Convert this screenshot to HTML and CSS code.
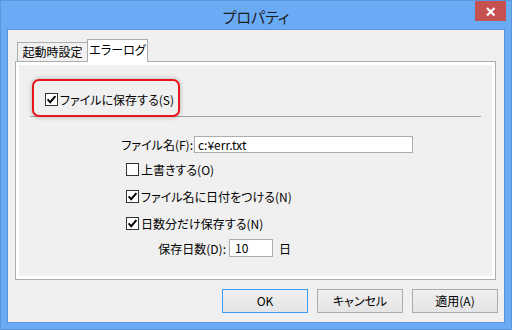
FILE: index.html
```html
<!DOCTYPE html>
<html lang="ja">
<head>
<meta charset="utf-8">
<title>プロパティ</title>
<link rel="stylesheet" href="styles.css">
</head>
<body>
<div class="window">
  <div class="titlebar">
    <span></span>
    <div class="title">プロパティ</div>
    <div class="close-wrap">
      <div class="close">
        <svg width="31" height="20" viewBox="0 0 31 20"><path d="M12 7 L19.5 14.5 M19.5 7 L12 14.5" stroke="#fff" stroke-width="2.2" fill="none"/></svg>
      </div>
    </div>
  </div>
  <div class="client">
    <div class="tabs">
      <div class="tab">起動時設定</div>
      <div class="tab active">エラーログ</div>
    </div>
    <div class="panel">
      <div class="page">
        <div class="save-row">
          <div class="highlight">
            <div class="check-row">
              <svg class="box" width="13" height="13" viewBox="0 0 13 13"><rect x="0.5" y="0.5" width="12" height="12" fill="#fff" stroke="#333"/><path d="M2.6 6.4 L5.2 9.2 L10.4 3.2" stroke="#000" stroke-width="2" fill="none"/></svg>
              <span>ファイルに保存する(S)</span>
            </div>
          </div>
        </div>
        <div class="field-row file">
          <span class="label">ファイル名(F):</span>
          <span class="input wide">c:¥err.txt</span>
        </div>
        <div class="check-row option first">
          <svg class="box" width="13" height="13" viewBox="0 0 13 13"><rect x="0.5" y="0.5" width="12" height="12" fill="#fff" stroke="#333"/></svg>
          <span>上書きする(O)</span>
        </div>
        <div class="check-row option">
          <svg class="box" width="13" height="13" viewBox="0 0 13 13"><rect x="0.5" y="0.5" width="12" height="12" fill="#fff" stroke="#333"/><path d="M2.6 6.4 L5.2 9.2 L10.4 3.2" stroke="#000" stroke-width="2" fill="none"/></svg>
          <span>ファイル名に日付をつける(N)</span>
        </div>
        <div class="check-row option">
          <svg class="box" width="13" height="13" viewBox="0 0 13 13"><rect x="0.5" y="0.5" width="12" height="12" fill="#fff" stroke="#333"/><path d="M2.6 6.4 L5.2 9.2 L10.4 3.2" stroke="#000" stroke-width="2" fill="none"/></svg>
          <span>日数分だけ保存する(N)</span>
        </div>
        <div class="field-row days">
          <span class="label">保存日数(D):</span>
          <span class="input short">10</span>
          <span class="unit">日</span>
        </div>
      </div>
    </div>
    <div class="buttons">
      <div class="btn default">OK</div>
      <div class="btn">キャンセル</div>
      <div class="btn">適用(A)</div>
    </div>
  </div>
</div>
</body>
</html>
```
FILE: styles.css
```css
html, body {
  margin: 0;
  padding: 0;
  background: #6aabf5;
}
body {
  font-family: "Noto Sans CJK JP", "Noto Sans", sans-serif;
  font-size: 12px;
  color: #000;
  font-feature-settings: "palt";
}
.window {
  width: 512px;
  height: 330px;
  box-sizing: border-box;
  border: 1px solid #5b96dc;
  background: #6aabf5;
  display: flex;
  flex-direction: column;
}
.titlebar {
  height: 28px;
  flex: none;
  display: grid;
  grid-template-columns: 1fr auto 1fr;
}
.title {
  font-size: 15px;
  line-height: 28px;
  padding-top: 2px;
  color: #1e1e1e;
}
.close-wrap {
  justify-self: end;
  padding-right: 5px;
}
.close {
  width: 31px;
  height: 20px;
  background: #c75050;
}
.close svg {
  display: block;
}
.client {
  flex: 1;
  margin: 0 6px 6px 6px;
  border: 1px solid #5a92d6;
  background: #f0f0f0;
  display: flex;
  flex-direction: column;
}
.tabs {
  display: flex;
  align-items: flex-end;
  height: 22px;
  margin: 9px 0 0 9px;
}
.tab {
  box-sizing: border-box;
  width: 71px;
  height: 19px;
  border: 1px solid #acacac;
  border-bottom: 0;
  background: #f0f0f0;
  text-align: center;
  line-height: 18px;
}
.tab.active {
  width: 61px;
  height: 23px;
  margin-left: -1px;
  margin-bottom: -1px;
  background: #fff;
  line-height: 20px;
  position: relative;
  z-index: 1;
}
.panel {
  box-sizing: border-box;
  height: 219px;
  margin: 0 8px 0 7px;
  border: 1px solid #adadad;
  background: #fff;
  padding: 3px;
}
.page {
  height: 100%;
  background: #f0f0f0;
  overflow: hidden;
}
.save-row {
  margin: 14px 11px 0 11px;
  border-bottom: 1px solid #a0a0a0;
}
.highlight {
  box-sizing: border-box;
  width: 148px;
  height: 38px;
  margin-left: 2px;
  margin-bottom: -1px;
  border: 2px solid #e8161c;
  border-radius: 7px;
  box-shadow: 0 0 5px rgba(0, 0, 0, 0.28);
  padding: 12px 0 0 11px;
  position: relative;
  z-index: 1;
  background: #f0f0f0;
}
.check-row {
  display: flex;
  align-items: center;
  height: 13px;
  line-height: 13px;
  gap: 2px;
  white-space: nowrap;
}
.box {
  display: block;
  flex: none;
}
.field-row {
  display: flex;
  align-items: center;
  white-space: nowrap;
}
.field-row.file {
  margin: 19px 0 0 95px;
}
.field-row.file .label {
  width: 79px;
  text-align: right;
  padding-right: 1px;
}
.input {
  box-sizing: border-box;
  background: #fff;
  border: 1px solid #abadb3;
  padding-left: 3px;
  line-height: 15px;
}
.input.wide {
  width: 219px;
  height: 17px;
}
.input.short {
  width: 44px;
  height: 18px;
  line-height: 16px;
  padding-left: 5px;
}
.check-row.option {
  margin: 14px 0 0 107px;
}
.check-row.option.first {
  margin-top: 10px;
}
.field-row.days {
  margin: 9px 0 0 136px;
}
.field-row.days .label {
  width: 71px;
  text-align: right;
  padding-right: 3px;
}
.unit {
  margin-left: 6px;
}
.buttons {
  display: flex;
  justify-content: flex-end;
  gap: 9px;
  margin: 9px 6px 0 0;
}
.btn {
  box-sizing: border-box;
  width: 86px;
  height: 24px;
  border: 1px solid #acacac;
  background: linear-gradient(#f0f0f0, #e5e5e5);
  text-align: center;
  line-height: 22px;
}
.btn.default {
  border-color: #3c9cf4;
}
```
